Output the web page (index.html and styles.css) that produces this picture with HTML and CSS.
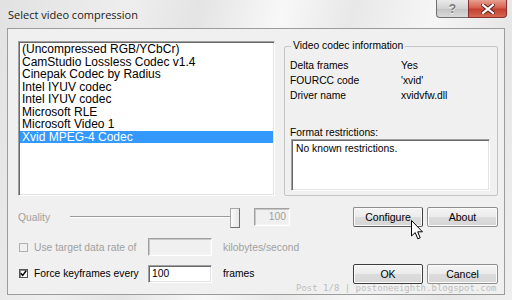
FILE: index.html
```html
<!DOCTYPE html>
<html lang="en">
<head>
<meta charset="UTF-8" />
<title>Select video compression</title>
<link rel="stylesheet" href="styles.css">
</head>
<body>

<div class="window">
  <div class="titlebar">
    <span class="title">Select video compression</span>
    <div class="caption-btns">
      <span class="btn-help">?</span>
      <span class="btn-close">
        <svg width="14" height="10" viewBox="0 0 14 10">
          <path d="M2 1 L12 9 M12 1 L2 9" stroke="#5a1d1d" stroke-width="4" stroke-linecap="square"/>
          <path d="M2 1 L12 9 M12 1 L2 9" stroke="#fff" stroke-width="2.2" stroke-linecap="square"/>
        </svg>
      </span>
    </div>
  </div>

  <div class="client">
    <div class="top">
      <ul class="listbox">
        <li>(Uncompressed RGB/YCbCr)</li>
        <li>CamStudio Lossless Codec v1.4</li>
        <li>Cinepak Codec by Radius</li>
        <li>Intel IYUV codec</li>
        <li>Intel IYUV codec</li>
        <li>Microsoft RLE</li>
        <li>Microsoft Video 1</li>
        <li class="selected">Xvid MPEG-4 Codec</li>
      </ul>

      <fieldset class="info">
        <legend>Video codec information</legend>
        <div class="props">
          <span>Delta frames</span><span>Yes</span>
          <span>FOURCC code</span><span>'xvid'</span>
          <span>Driver name</span><span>xvidvfw.dll</span>
        </div>
        <div class="restr-label">Format restrictions:</div>
        <div class="restr-box">No known restrictions.</div>
      </fieldset>
    </div>

    <div class="row row-quality">
      <span class="disabled quality-label">Quality</span>
      <div class="slider"><span class="thumb"></span></div>
      <span class="edit edit-small disabled-edit">100</span>
      <div class="buttons">
        <button class="btn btn-hover">Configure</button>
        <button class="btn">About</button>
      </div>
    </div>

    <div class="row row-rate">
      <label class="check disabled"><span class="box"></span>Use target data rate of</label>
      <span class="edit disabled-edit"></span>
      <span class="disabled unit">kilobytes/second</span>
    </div>

    <div class="row row-keys">
      <label class="check"><span class="box checked">
        <svg width="7" height="7" viewBox="0 0 7 7"><path d="M0.8 3.2 L2.7 5.4 L6.2 0.8" fill="none" stroke="#000" stroke-width="1.5"/></svg>
      </span>Force keyframes every</label>
      <span class="edit">100</span>
      <span class="unit">frames</span>
      <div class="buttons">
        <button class="btn btn-default">OK</button>
        <button class="btn">Cancel</button>
      </div>
    </div>
  </div>

  <div class="watermark">Post 1/8 | postoneeighth.blogspot.com</div>

  <svg class="cursor" width="13" height="20" viewBox="0 0 13 20">
    <path d="M0.5 0.5 L0.5 16 L4.2 12.6 L6.8 18.8 L9.2 17.8 L6.7 11.8 L11.5 11.8 Z" fill="#fff" stroke="#000" stroke-width="1" stroke-linejoin="miter"/>
  </svg>
</div>

</body>
</html>
```

FILE: styles.css
```css
/* Aero style dialog, 512x300 */
body {
  margin: 0;
  font-family: 'Liberation Sans', Arial, sans-serif;
  font-size: 10.3px;
  color: #000;
}

.window {
  position: relative;
  width: 512px;
  height: 300px;
  overflow: hidden;
  display: flex;
  flex-direction: column;
  background: linear-gradient(105deg, #e2e2e2 0%, #eeeeee 22%, #e4e4e4 34%, #f8f8f8 48%, #e8e8e8 60%, #f6f6f6 74%, #e6e6e6 88%, #efefef 100%);
}

.titlebar {
  height: 28px;
  display: flex;
  align-items: flex-start;
  justify-content: space-between;
  padding: 0 5px 0 8px;
}

.title {
  font-family: 'Open Sans', 'Noto Sans', sans-serif;
  font-size: 11px;
  line-height: 12px;
  margin-top: 9px;
  color: #1a1a1a;
}

.caption-btns {
  display: flex;
}

.btn-help,
.btn-close {
  height: 17px;
  display: flex;
  align-items: center;
  justify-content: center;
  border: 1px solid #6f6f6f;
  border-top: none;
}

.btn-help {
  width: 31px;
  border-radius: 0 0 0 4px;
  border-right: none;
  background: linear-gradient(#eaeaea, #d2d2d2 50%, #c2c2c2 51%, #dadada);
  color: #777;
  font-size: 12px;
  font-weight: bold;
  text-shadow: 0 1px 0 #fff;
}

.btn-close {
  width: 37px;
  border-radius: 0 0 4px 0;
  border-color: #8a2f2f;
  background: linear-gradient(#e8a090, #d4644f 45%, #c4412e 55%, #d26a50);
}

/* client area */
.client {
  flex: 1;
  margin: 0 7px 5px 7px;
  border: 1px solid #9c9c9c;
  background: #f0f0f0;
  padding: 12px 6px 0 10px;
  display: flex;
  flex-direction: column;
}

.top {
  display: flex;
  gap: 9px;
  align-items: flex-start;
}

.listbox {
  list-style: none;
  margin: 0;
  padding: 1px 1px;
  width: 257px;
  height: 155px;
  box-sizing: border-box;
  background: #fff;
  border: 1px solid;
  border-color: #a0a0a0 #fff #fff #a0a0a0;
  box-shadow: inset 1px 1px 0 #696969, inset -1px -1px 0 #e3e3e3;
  font-size: 12px;
}

.listbox li {
  line-height: 12.5px;
  height: 12.5px;
  padding-left: 2px;
  white-space: nowrap;
}

.listbox li.selected {
  background: #3399ff;
  color: #fff;
}

.info {
  width: 214px;
  height: 156px;
  box-sizing: border-box;
  margin: -1px 0 0 0;
  padding: 0 7px 4px 5px;
  border: 1px solid #c4c4c4;
  border-radius: 2px;
  min-width: 0;
  display: flex;
  flex-direction: column;
}

.info legend {
  padding: 0 2px;
  margin-left: 1px;
  line-height: 12px;
}

.props {
  display: grid;
  grid-template-columns: 111px 1fr;
  line-height: 15px;
  margin-top: 6px;
}

.restr-label {
  margin-top: 24px;
  line-height: 12px;
}

.restr-box {
  flex: 1;
  margin: 0 0 0 1px;
  background: #fff;
  padding: 3px 4px;
  border: 1px solid;
  border-color: #a0a0a0 #fff #fff #a0a0a0;
  box-shadow: inset 1px 1px 0 #696969, inset -1px -1px 0 #e3e3e3;
}

/* bottom rows */
.row {
  display: flex;
  align-items: center;
}

.row-quality {
  margin-top: 11px;
  height: 20px;
}

.row-rate {
  margin-top: 11px;
  height: 18px;
}

.row-keys {
  margin-top: 8px;
  height: 19px;
}

.disabled {
  color: #a0a0a0;
}

.quality-label {
  width: 52px;
}

.slider {
  position: relative;
  width: 170px;
  height: 20px;
  display: flex;
  align-items: center;
}

.slider::before {
  content: '';
  width: 100%;
  height: 1px;
  background: #9a9a9a;
  border-bottom: 1px solid #fff;
}

.slider .thumb {
  position: absolute;
  right: 0;
  top: 1px;
  width: 8px;
  height: 18px;
  background: linear-gradient(90deg, #fafafa, #e6e6e6);
  border: 1px solid #a8a8a8;
  border-right-color: #707070;
  border-bottom-color: #707070;
}

.edit {
  width: 64px;
  height: 18px;
  box-sizing: border-box;
  background: #fff;
  border: 1px solid;
  border-color: #a0a0a0 #fff #fff #a0a0a0;
  box-shadow: inset 1px 1px 0 #696969, inset -1px -1px 0 #e3e3e3;
  padding: 0 3px;
  line-height: 16px;
}

.edit-small {
  width: 36px;
  margin-left: 14px;
  text-align: right;
}

.disabled-edit {
  background: #f0f0f0;
  color: #a0a0a0;
  box-shadow: inset 1px 1px 0 #c8c8c8, inset -1px -1px 0 #f4f4f4;
}

.check {
  display: flex;
  align-items: center;
  width: 129px;
  padding-left: 1px;
}

.check .box {
  width: 7px;
  height: 7px;
  border: 1px solid #a0a0a0;
  background: #fff;
  margin-right: 6px;
  display: flex;
  align-items: center;
  justify-content: center;
}

.check.disabled .box {
  background: #f0f0f0;
  border-color: #b0b0b0;
}

.check .box.checked {
  border-color: #555;
  box-shadow: inset 1px 1px 0 #888;
}

.unit {
  margin-left: 11px;
}

.buttons {
  margin-left: auto;
  display: flex;
  gap: 4px;
}

.btn {
  font-family: inherit;
  font-size: 10.5px;
  width: 70px;
  height: 20px;
  padding: 0;
  border: 1px solid #8e8e8e;
  border-radius: 2px;
  background: linear-gradient(#f4f4f4, #ebebeb 50%, #dcdcdc 51%, #d6d6d6);
  color: #000;
  box-shadow: inset 0 0 0 1px #fbfbfb;
}

.buttons .btn + .btn {
  width: 71px;
}

.btn-hover {
  border-color: #8e8e8e #3c3c3c #5a5a5a #8e8e8e;
}

.btn-default {
  border-color: #3c3c3c;
}

.watermark {
  position: absolute;
  left: 296px;
  top: 282px;
  font-family: 'DejaVu Sans Mono', monospace;
  font-size: 9px;
  line-height: 12px;
  color: #bdbdbd;
}

.cursor {
  position: absolute;
  left: 411px;
  top: 220px;
}
```
